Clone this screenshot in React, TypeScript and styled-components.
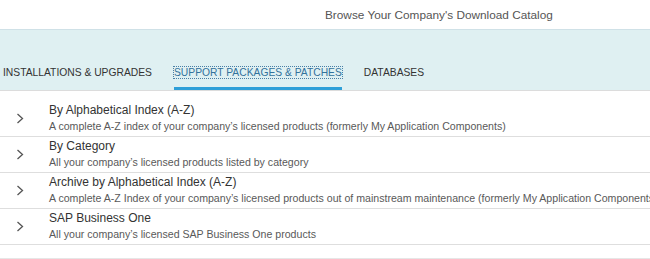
import React from "react";
import styled, { createGlobalStyle } from "styled-components";

const Global = createGlobalStyle`
  html, body { margin: 0; padding: 0; background: #fff; }
  body { font-family: Arial, "Liberation Sans", sans-serif; overflow: hidden; }
`;

const Page = styled.div`
  width: 650px;
  height: 259px;
  overflow: hidden;
  background: #fff;
`;

const Header = styled.div`
  height: 29px;
  box-sizing: border-box;
  padding-left: 325px;
  padding-top: 7px;
  font-size: 11.8px;
  line-height: 16px;
  color: #555;
  white-space: nowrap;
`;

const Band = styled.div`
  height: 62px;
  box-sizing: border-box;
  background: #dff0f2;
  border-top: 1px solid #cfe1e7;
  border-bottom: 1px solid #dcdcdc;
  display: flex;
  align-items: flex-end;
  padding-left: 3px;
`;

const TabBar = styled.div`
  display: flex;
  gap: 22px;
`;

const Tab = styled.div<{ $active?: boolean }>`
  font-size: 10.3px;
  line-height: 13px;
  text-transform: uppercase;
  color: ${(p) => (p.$active ? "#33729c" : "#333")};
  padding-bottom: 8px;
  border-bottom: 3px solid ${(p) => (p.$active ? "#2e9fd8" : "transparent")};
  white-space: nowrap;
`;

const Focus = styled.span`
  outline: 1px dotted #4a7fa5;
  outline-offset: 0px;
`;

const List = styled.div`
  padding-top: 10px;
  padding-bottom: 13px;
  border-bottom: 1px solid #e6e6e6;
`;

const Row = styled.div`
  display: flex;
  align-items: center;
  height: 36px;
  box-sizing: border-box;
  padding-bottom: 1px;
  border-bottom: 1px solid #dedede;
  white-space: nowrap;
`;

const Chevron = styled.div`
  width: 49px;
  flex: none;
  display: flex;
  padding-left: 16px;
  box-sizing: border-box;
  color: #555;
`;

const Texts = styled.div`
  display: flex;
  flex-direction: column;
  min-width: 0;
`;

const Title = styled.div`
  font-size: 12px;
  line-height: 16px;
  color: #333;
`;

const Desc = styled.div`
  font-size: 10.6px;
  line-height: 16px;
  color: #595959;
`;

const Arrow = () => (
  <svg width="8" height="11" viewBox="0 0 8 11">
    <path d="M1.5 1 L6.5 5.5 L1.5 10" fill="none" stroke="#555" strokeWidth="1.3" />
  </svg>
);

const items = [
  {
    title: "By Alphabetical Index (A-Z)",
    desc: "A complete A-Z index of your company\u2019s licensed products (formerly My Application Components)",
  },
  { title: "By Category", desc: "All your company\u2019s licensed products listed by category" },
  {
    title: "Archive by Alphabetical Index (A-Z)",
    desc: "A complete A-Z Index of your company\u2019s licensed products out of mainstream maintenance (formerly My Application Components)",
  },
  { title: "SAP Business One", desc: "All your company\u2019s licensed SAP Business One products" },
];

export default function App() {
  return (
    <Page>
      <Global />
      <Header>Browse Your Company's Download Catalog</Header>
      <Band>
        <TabBar>
          <Tab>Installations &amp; Upgrades</Tab>
          <Tab $active>
            <Focus>Support Packages &amp; Patches</Focus>
          </Tab>
          <Tab>Databases</Tab>
        </TabBar>
      </Band>
      <List>
        {items.map((it) => (
          <Row key={it.title}>
            <Chevron>
              <Arrow />
            </Chevron>
            <Texts>
              <Title>{it.title}</Title>
              <Desc>{it.desc}</Desc>
            </Texts>
          </Row>
        ))}
      </List>
    </Page>
  );
}
